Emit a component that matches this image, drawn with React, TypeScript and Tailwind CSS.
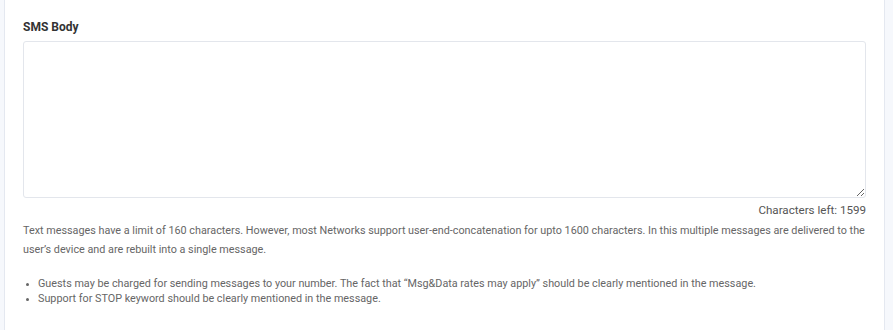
export default function App() {
  return (
    <div className="h-[330px] w-[893px] overflow-hidden bg-[#f6f8fc] pl-1 pr-2 font-['Roboto',sans-serif]">
      <div className="h-full border-x border-[#e4e8f0] bg-white px-[18px] pt-[19px]">
        <label className="block text-[12px] font-bold leading-4 text-[#333]">SMS Body</label>
        <textarea className="mt-[6px] block h-[157px] w-full resize-y rounded-[3px] border border-[#e3e6ec] bg-white" />
        <div className="mt-[4px] text-right text-[11.6px] leading-4 text-[#555]">Characters left: 1599</div>
        <p className="mt-[3px] text-[10.8px] leading-[19px] text-[#666]">
          Text messages have a limit of 160 characters. However, most Networks support user-end-concatenation for upto 1600 characters. In this multiple messages are delivered to the user’s device and are rebuilt into a single message.
        </p>
        <ul className="mt-[17px] list-disc pl-[15px] text-[10.8px] leading-[15px] text-[#666] marker:text-[9px]">
          <li>Guests may be charged for sending messages to your number. The fact that “Msg&amp;Data rates may apply” should be clearly mentioned in the message.</li>
          <li>Support for STOP keyword should be clearly mentioned in the message.</li>
        </ul>
      </div>
    </div>
  );
}
